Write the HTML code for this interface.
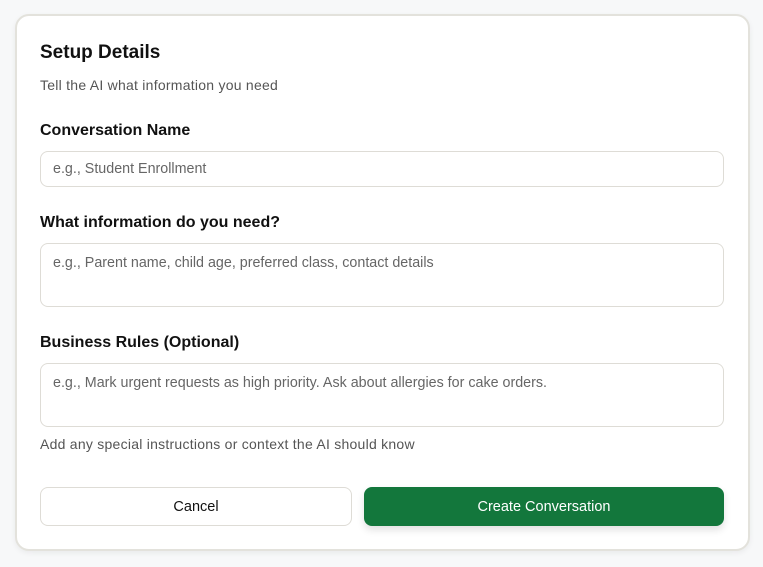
<!DOCTYPE html>
<html><head><style>
body{margin:0;width:763px;height:567px;background:#f7f8f9;font-family:"Liberation Sans",sans-serif;position:relative;overflow:hidden}
.card{position:absolute;left:15px;top:14px;width:731px;height:533px;background:#fff;border:2px solid #e3e2dc;border-radius:14px;box-shadow:0 2px 6px rgba(0,0,0,.06)}
.a{position:absolute;white-space:nowrap}
.h{font-size:19px;font-weight:bold;color:#111;left:40px;top:42px}
.s{font-size:14px;letter-spacing:.25px;color:#555;left:40px}
.l{font-size:16px;font-weight:bold;color:#111;left:40px}
.in{position:absolute;left:40px;width:684px;border:1px solid #dedcd6;border-radius:8px;background:#fff;box-sizing:border-box;font-size:14.3px;color:#666;padding:0 12px}
.b{position:absolute;top:487px;height:39px;border-radius:8px;box-sizing:border-box;font-size:14.5px;display:flex;align-items:center;justify-content:center}
</style></head><body>
<div class="card"></div>
<div class="a h">Setup Details</div>
<div class="a s" style="top:77px">Tell the AI what information you need</div>
<div class="a l" style="top:122px">Conversation Name</div>
<div class="in" style="top:151px;height:36px;line-height:34px">e.g., Student Enrollment</div>
<div class="a l" style="top:214px">What information do you need?</div>
<div class="in" style="top:243px;height:64px;padding-top:11px">e.g., Parent name, child age, preferred class, contact details</div>
<div class="a l" style="top:334px">Business Rules (Optional)</div>
<div class="in" style="top:363px;height:64px;padding-top:11px">e.g., Mark urgent requests as high priority. Ask about allergies for cake orders.</div>
<div class="a s" style="top:436px">Add any special instructions or context the AI should know</div>
<div class="b" style="left:40px;width:312px;border:1px solid #dedcd6;background:#fff;color:#111">Cancel</div>
<div class="b" style="left:364px;width:360px;background:#13773c;color:#fff;box-shadow:0 4px 8px rgba(0,0,0,.12)">Create Conversation</div>
</body></html>
